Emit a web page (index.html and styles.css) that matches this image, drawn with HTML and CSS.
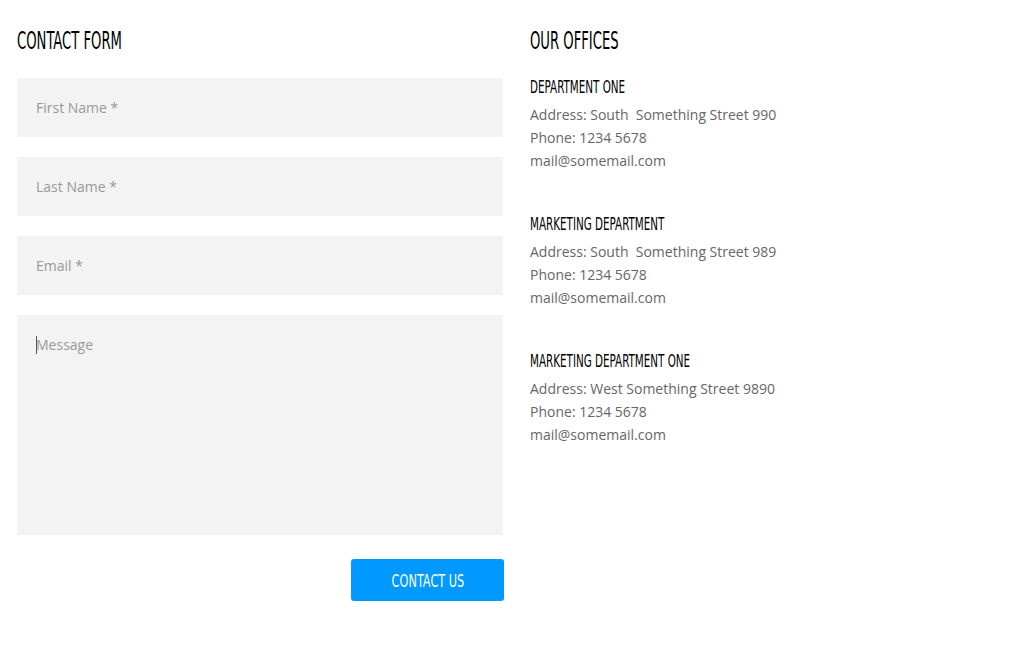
FILE: index.html
```html
<!DOCTYPE html>
<html>
<head>
<meta charset="utf-8">
<link rel="stylesheet" href="styles.css">
</head>
<body>
<div class="page">
  <section class="form-col">
    <h2 class="title"><span class="cond">CONTACT FORM</span></h2>
    <form class="form">
      <input class="field" type="text" placeholder="First Name *">
      <input class="field" type="text" placeholder="Last Name *">
      <input class="field" type="email" placeholder="Email *">
      <div class="area-wrap">
        <textarea class="field area" placeholder="Message"></textarea>
        <span class="caret"></span>
      </div>
      <div class="actions">
        <button type="button" class="btn"><span class="cond btn-label">CONTACT US</span></button>
      </div>
    </form>
  </section>
  <section class="offices-col">
    <h2 class="title"><span class="cond">OUR OFFICES</span></h2>
    <div class="office">
      <h3 class="dept"><span class="cond">DEPARTMENT ONE</span></h3>
      <p class="line">Address: South&nbsp; Something Street 990</p>
      <p class="line">Phone: 1234 5678</p>
      <p class="line">mail@somemail.com</p>
    </div>
    <div class="office">
      <h3 class="dept"><span class="cond">MARKETING DEPARTMENT</span></h3>
      <p class="line">Address: South&nbsp; Something Street 989</p>
      <p class="line">Phone: 1234 5678</p>
      <p class="line">mail@somemail.com</p>
    </div>
    <div class="office">
      <h3 class="dept"><span class="cond">MARKETING DEPARTMENT ONE</span></h3>
      <p class="line">Address: West Something Street 9890</p>
      <p class="line">Phone: 1234 5678</p>
      <p class="line">mail@somemail.com</p>
    </div>
  </section>
</div>
</body>
</html>
```

FILE: styles.css
```css
* { box-sizing: border-box; }
html, body { margin: 0; padding: 0; background: #fff; }
body { font-family: "Open Sans", sans-serif; color: #666; }

.page {
  display: flex;
  gap: 27px;
  padding: 0 17px;
}

.form-col { width: 486px; flex: none; }
.offices-col { flex: 1; }

.cond {
  display: inline-block;
  font-family: "Liberation Sans Narrow", "DejaVu Sans Condensed", sans-serif;
  font-weight: normal;
  transform: scaleX(0.61);
  transform-origin: left center;
  white-space: nowrap;
}

.title {
  margin: 0;
  padding-top: 26px;
  height: 78px;
  font-size: 24px;
  line-height: 28px;
  font-weight: normal;
  color: #000;
}

.form { display: flex; flex-direction: column; gap: 20px; }

.field {
  display: block;
  width: 100%;
  height: 59px;
  border: 0;
  background: #f3f3f3;
  padding: 0 19px;
  font-family: "Open Sans", sans-serif;
  font-size: 14px;
  color: #666;
  outline: none;
}
.field::placeholder { color: #999; opacity: 1; }

.area-wrap { position: relative; }

.area {
  height: 220px;
  padding-top: 20px;
  resize: none;
  line-height: 20px;
}

.caret {
  position: absolute;
  left: 19px;
  top: 21px;
  width: 1px;
  height: 18px;
  background: #555;
}

.actions { display: flex; justify-content: flex-end; margin-top: 4px; margin-right: -1px; }

.btn {
  width: 153px;
  height: 42px;
  border: 0;
  border-radius: 3px;
  background: #0099ff;
  color: #fff;
  font-size: 18px;
  padding: 0;
  cursor: pointer;
  text-align: center;
}
.btn-label { transform-origin: center center; transform: scaleX(0.7); position: relative; top: 1px; }

.office { height: 137px; }

.dept {
  margin: 0;
  font-size: 18px;
  line-height: 20px;
  height: 25px;
  font-weight: normal;
  color: #000;
  position: relative;
  top: -2px;
}
.dept .cond { transform: scaleX(0.64); }

.line {
  margin: 0;
  font-size: 14px;
  line-height: 23px;
  color: #666;
}
```
